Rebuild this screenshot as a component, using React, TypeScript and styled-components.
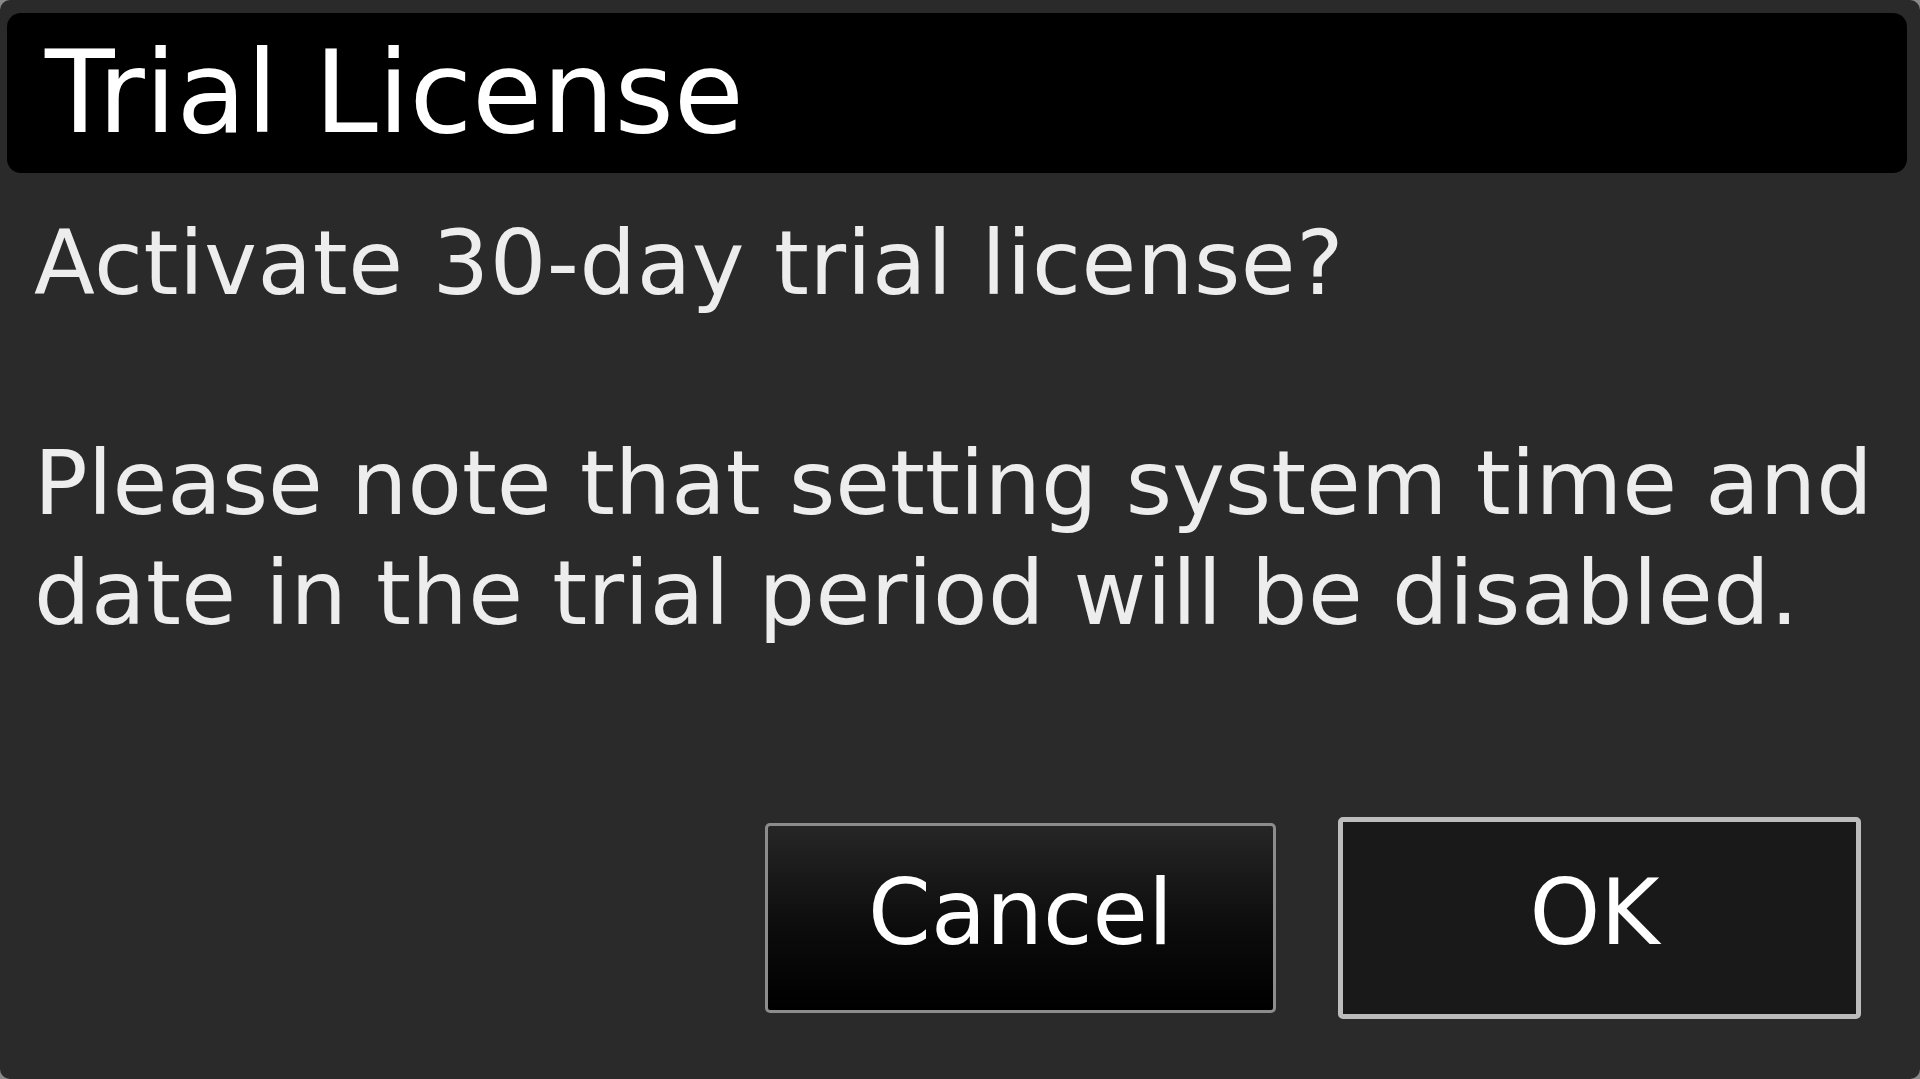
import React from 'react'
import styled, { createGlobalStyle } from 'styled-components'

const GlobalStyle = createGlobalStyle`
  html, body {
    margin: 0;
    padding: 0;
    background: #8a8a8a;
  }
  #root {
    width: 1920px;
    height: 1079px;
  }
`

const Dialog = styled.div`
  box-sizing: border-box;
  width: 1920px;
  height: 1079px;
  background: #2a2a2a;
  border-radius: 10px;
  overflow: hidden;
  display: flex;
  flex-direction: column;
  padding: 13px 13px 0 7px;
  font-family: 'DejaVu Sans', 'Liberation Sans', sans-serif;
  color: #ededed;
`

const TitleBar = styled.div`
  height: 160px;
  background: #000;
  border-radius: 14px;
  display: flex;
  align-items: center;
  padding-left: 38px;
`

const Title = styled.h1`
  margin: 0;
  font-size: 114px;
  font-weight: normal;
  color: #fff;
  line-height: 1;
`

const Body = styled.div`
  padding: 35px 0 0 27px;
  font-size: 89px;
  line-height: 110px;
  white-space: nowrap;
`

// spacing per line evens out the glyph widths of the scaled source
const Line = styled.div<{ $gapBefore?: boolean; $spacing?: number }>`
  margin-top: ${(p) => (p.$gapBefore ? '110px' : '0')};
  letter-spacing: ${(p) => p.$spacing ?? 0}px;
`

const Buttons = styled.div`
  margin-top: auto;
  margin-bottom: 60px;
  display: flex;
  justify-content: flex-end;
  align-items: center;
  gap: 62px;
  padding-right: 46px;
`

const Button = styled.button<{ $focused?: boolean }>`
  box-sizing: border-box;
  width: ${(p) => (p.$focused ? '523px' : '511px')};
  height: ${(p) => (p.$focused ? '202px' : '190px')};
  border: ${(p) => (p.$focused ? '5px solid #bcbcbc' : '3px solid #8c8c8c')};
  border-radius: 5px;
  background: ${(p) =>
    p.$focused ? '#191919' : 'linear-gradient(to bottom, #262626 0%, #0c0c0c 55%, #000 100%)'};
  color: #fff;
  font-family: 'DejaVu Sans', 'Liberation Sans', sans-serif;
  font-size: 90px;
  padding: 0 ${(p) => (p.$focused ? '10px' : '0')} 12px 0;
  display: flex;
  align-items: center;
  justify-content: center;
`

export default function App() {
  return (
    <>
      <GlobalStyle />
      <Dialog>
        <TitleBar>
          <Title>Trial License</Title>
        </TitleBar>
        <Body>
          <Line $spacing={0.6}>Activate 30-day trial license?</Line>
          <Line $gapBefore $spacing={0}>
            Please note that setting system time and
          </Line>
          <Line $spacing={0.45}>date in the trial period will be disabled.</Line>
        </Body>
        <Buttons>
          <Button>Cancel</Button>
          <Button $focused>OK</Button>
        </Buttons>
      </Dialog>
    </>
  )
}
